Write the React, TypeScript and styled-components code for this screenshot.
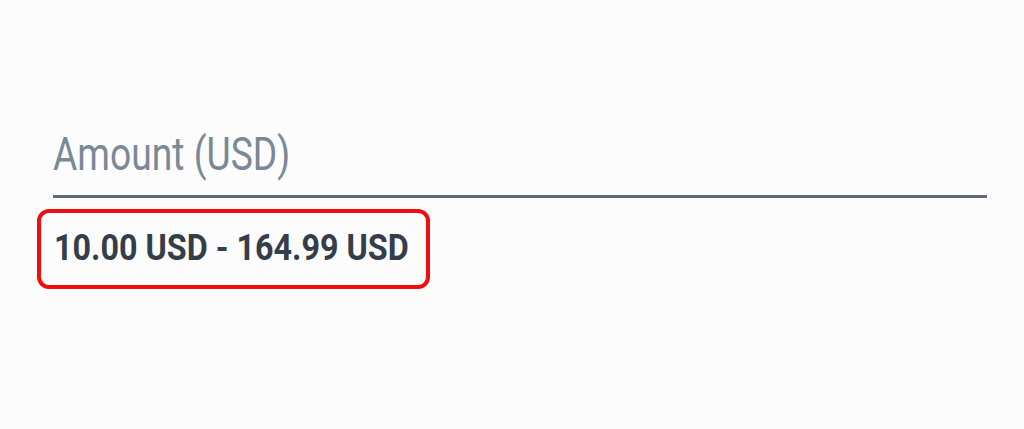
import React from "react";
import styled, { createGlobalStyle } from "styled-components";

const GlobalStyle = createGlobalStyle`
  html, body {
    margin: 0;
    padding: 0;
    background: #fcfcfc;
  }
  body {
    font-family: Roboto, "Liberation Sans", sans-serif;
  }
`;

const Page = styled.div`
  width: 1024px;
  height: 429px;
  box-sizing: border-box;
  padding: 126px 37px 0 37px;
  background: #fcfcfc;
`;

const Field = styled.div`
  margin-left: 16px;
  border-bottom: 3px solid #5f6b7a;
  padding-bottom: 13px;
`;

// condensed look: Roboto squeezed horizontally
const Squeeze = styled.span<{ $ratio: number }>`
  display: inline-block;
  transform: scaleX(${(p) => p.$ratio});
  transform-origin: left center;
  white-space: nowrap;
`;

const Label = styled.div`
  font-size: 46px;
  line-height: 56px;
  color: #7b8896;
  font-weight: 400;
`;

const Range = styled.div`
  display: inline-flex;
  align-items: center;
  margin-top: 11px;
  height: 80px;
  box-sizing: border-box;
  padding: 0 13px 4px;
  width: 393px;
  border: 4px solid #f20d0d;
  border-radius: 12px;
`;

const RangeText = styled.span`
  font-size: 37px;
  font-weight: 700;
  color: #343d4a;
`;

export default function App() {
  return (
    <>
      <GlobalStyle />
      <Page>
        <Field>
          <Label>
            <Squeeze $ratio={0.81}>Amount (USD)</Squeeze>
          </Label>
        </Field>
        <Range>
          <RangeText>
            <Squeeze $ratio={0.873}>10.00 USD - 164.99 USD</Squeeze>
          </RangeText>
        </Range>
      </Page>
    </>
  );
}
